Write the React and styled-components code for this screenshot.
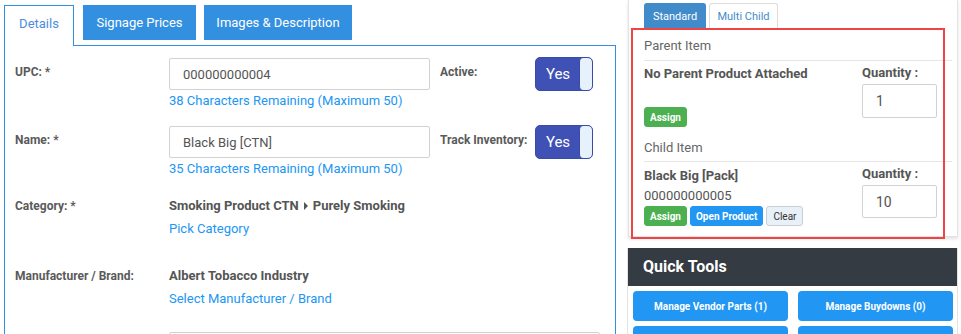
import React from "react";
import styled, { createGlobalStyle } from "styled-components";

const Global = createGlobalStyle`
  html, body { margin: 0; padding: 0; background: #fff; }
  body { font-family: Roboto, "Liberation Sans", Arial, sans-serif; }
  * { box-sizing: border-box; }
`;

const Page = styled.div`
  width: 961px;
  height: 334px;
  overflow: hidden;
  display: flex;
  align-items: flex-start;
  position: relative;
`;

const LeftCol = styled.div`
  width: 616px;
  padding: 5px 0 0 4px;
  flex-shrink: 0;
`;

const TabBar = styled.div`
  display: flex;
  align-items: flex-start;
  height: 40px;
`;

const ActiveTab = styled.div`
  width: 70px;
  height: 41px;
  margin-bottom: -1px;
  border: 1px solid #2f8fe0;
  border-bottom: none;
  background: #fff;
  color: #4d8edc;
  font-size: 13px;
  display: flex;
  align-items: center;
  justify-content: center;
  position: relative;
  z-index: 1;
  padding-bottom: 5px;
`;

const TabButton = styled.div`
  height: 35px;
  width: ${(p) => p.$w}px;
  margin-left: ${(p) => p.$ml}px;
  background: #3390e0;
  color: #fff;
  font-size: 13px;
  display: flex;
  align-items: center;
  justify-content: center;
`;

const Panel = styled.div`
  width: 612px;
  height: 400px;
  border: 1px solid #2f8fe0;
  padding: 12px 0 0 10px;
`;

const Row = styled.div`
  display: flex;
  align-items: flex-start;
  margin-top: ${(p) => p.$mt || 0}px;
`;

const Label = styled.div`
  width: 154px;
  flex-shrink: 0;
  padding-top: ${(p) => p.$pt || 0}px;
  font-size: 12px;
  line-height: 20px;
  font-weight: 700;
  color: #5a5a5a;
  white-space: nowrap;
`;

const Field = styled.div`
  width: ${(p) => p.$w || 261}px;
  display: flex;
  flex-direction: column;
`;

const TextInput = styled.div`
  height: 32px;
  border: 1px solid #d2d2d2;
  border-radius: 2px;
  padding: 0 13px;
  display: flex;
  align-items: center;
  font-size: 13px;
  color: #555;
  background: #fff;
`;

const Helper = styled.div`
  margin-top: ${(p) => p.$mt || 0}px;
  font-size: 13px;
  line-height: 20px;
  color: #2196f3;
  white-space: nowrap;
`;

const Value = styled.div`
  font-size: 13px;
  line-height: 20px;
  font-weight: 700;
  color: #555;
  display: flex;
  align-items: center;
  white-space: nowrap;
`;

const Caret = styled.span`
  display: inline-block;
  width: 0;
  height: 0;
  border-top: 4px solid transparent;
  border-bottom: 4px solid transparent;
  border-left: 4px solid #555;
  margin: 0 5px 0 5px;
`;

const SideLabel = styled(Label)`
  width: 95px;
  margin-left: 10px;
`;

const Toggle = styled.div`
  width: 58px;
  height: 34px;
  margin-top: -1px;
  background: #3f51b5;
  border: 1px solid #3a4aa8;
  border-radius: 5px;
  display: flex;
  overflow: hidden;
`;

const ToggleText = styled.div`
  flex: 1;
  display: flex;
  align-items: center;
  justify-content: center;
  color: #fff;
  font-size: 15px;
  padding-left: 1px;
`;

const ToggleKnob = styled.div`
  width: 13px;
  background: #e7f1fc;
  border-left: 1px solid #3a4aa8;
  border-radius: 4px;
`;

const RightCol = styled.div`
  width: 331px;
  margin-left: 11px;
  flex-shrink: 0;
  position: relative;
`;

const Card = styled.div`
  margin-left: 1px;
  border: 1px solid #e3e3e3;
  border-top: none;
  padding: 3px 5px 10px 15px;
  box-shadow: 0 2px 3px rgba(0, 0, 0, 0.12);
  background: #fff;
`;

const PillTabs = styled.div`
  display: flex;
  gap: 3px;
`;

const Pill = styled.div`
  height: 25px;
  width: ${(p) => p.$w}px;
  border-radius: 3px 3px 0 0;
  font-size: 11px;
  display: flex;
  align-items: center;
  justify-content: center;
  background: ${(p) => (p.$active ? "#428bca" : "#fff")};
  color: ${(p) => (p.$active ? "#fff" : "#428bca")};
  border: 1px solid ${(p) => (p.$active ? "#428bca" : "#ddd")};
  border-bottom: none;
`;

const SectionTitle = styled.div`
  margin-top: ${(p) => p.$mt}px;
  font-size: 13px;
  line-height: 20px;
  color: #666;
  padding-bottom: ${(p) => p.$pb}px;
  border-bottom: 1px solid #e6e6e6;
`;

const ItemRow = styled.div`
  display: flex;
  justify-content: space-between;
  padding-right: 15px;
  margin-top: ${(p) => p.$mt}px;
`;

const ItemInfo = styled.div`
  display: flex;
  flex-direction: column;
`;

const ItemName = styled.div`
  font-size: 13px;
  line-height: 20px;
  font-weight: 700;
  color: #555;
  margin-top: ${(p) => p.$mt || 0}px;
`;

const ItemCode = styled.div`
  font-size: 13px;
  line-height: 20px;
  color: #555;
`;

const BtnRow = styled.div`
  display: flex;
  gap: 3px;
  margin-top: ${(p) => p.$mt || 0}px;
`;

const SmallBtn = styled.div`
  height: 20px;
  padding: 0 ${(p) => p.$px || 5}px;
  border-radius: 3px;
  font-size: 10px;
  font-weight: ${(p) => (p.$variant === "light" ? 400 : 700)};
  display: flex;
  align-items: center;
  background: ${(p) =>
    p.$variant === "green" ? "#4caf50" : p.$variant === "blue" ? "#2196f3" : "#e8f0f8"};
  color: ${(p) => (p.$variant === "light" ? "#333" : "#fff")};
  border: 1px solid
    ${(p) =>
      p.$variant === "green" ? "#4caf50" : p.$variant === "blue" ? "#2196f3" : "#c9cfd6"};
`;

const QtyCol = styled.div`
  width: 75px;
  display: flex;
  flex-direction: column;
`;

const QtyLabel = styled.div`
  font-size: 13px;
  line-height: 20px;
  font-weight: 700;
  color: #555;
  white-space: nowrap;
`;

const QtyInput = styled.div`
  margin-top: 1px;
  height: ${(p) => p.$h}px;
  border: 1px solid #d2d2d2;
  border-radius: 2px;
  padding-left: 13px;
  display: flex;
  align-items: center;
  font-size: 14px;
  color: #555;
`;

const Highlight = styled.div`
  position: absolute;
  left: 4px;
  top: 28px;
  width: 314px;
  height: 211px;
  border: 2px solid #f04444;
  pointer-events: none;
`;

const Tools = styled.div`
  margin-top: 11px;
  border: 1px solid #e3e3e3;
  border-top: none;
  background: #fff;
`;

const ToolsHeader = styled.div`
  height: 38px;
  background: #353b42;
  color: #fff;
  font-size: 16px;
  font-weight: 700;
  padding: 0 0 2px 15px;
  display: flex;
  align-items: center;
`;

const ToolsGrid = styled.div`
  display: grid;
  grid-template-columns: 155px 155px;
  column-gap: 10px;
  row-gap: 5px;
  padding: 5px 0 0 5px;
`;

const ToolBtn = styled.div`
  height: 30px;
  border-radius: 4px;
  background: #2196f3;
  color: #fff;
  font-size: 10px;
  font-weight: 700;
  display: flex;
  align-items: center;
  justify-content: center;
`;

export default function App() {
  return (
    <>
      <Global />
      <Page>
        <LeftCol>
          <TabBar>
            <ActiveTab>Details</ActiveTab>
            <TabButton $ml={9} $w={113}>Signage Prices</TabButton>
            <TabButton $ml={8} $w={148}>Images &amp; Description</TabButton>
          </TabBar>
          <Panel>
            <Row>
              <Label $pt={4}>UPC: *</Label>
              <Field>
                <TextInput>000000000004</TextInput>
                <Helper $mt={1}>38 Characters Remaining (Maximum 50)</Helper>
              </Field>
              <SideLabel $pt={4}>Active:</SideLabel>
              <Toggle>
                <ToggleText>Yes</ToggleText>
                <ToggleKnob />
              </Toggle>
            </Row>
            <Row $mt={15}>
              <Label $pt={4}>Name: *</Label>
              <Field>
                <TextInput>Black Big [CTN]</TextInput>
                <Helper $mt={1}>35 Characters Remaining (Maximum 50)</Helper>
              </Field>
              <SideLabel $pt={4}>Track Inventory:</SideLabel>
              <Toggle>
                <ToggleText>Yes</ToggleText>
                <ToggleKnob />
              </Toggle>
            </Row>
            <Row $mt={17}>
              <Label>Category: *</Label>
              <Field>
                <Value>
                  Smoking Product CTN<Caret />Purely Smoking
                </Value>
                <Helper $mt={3}>Pick Category</Helper>
              </Field>
            </Row>
            <Row $mt={27}>
              <Label>Manufacturer / Brand:</Label>
              <Field>
                <Value>Albert Tobacco Industry</Value>
                <Helper $mt={3}>Select Manufacturer / Brand</Helper>
              </Field>
            </Row>
            <Row $mt={23}>
              <Label />
              <Field $w={431}>
                <TextInput />
              </Field>
            </Row>
          </Panel>
        </LeftCol>
        <RightCol>
          <Card>
            <PillTabs>
              <Pill $active $w={62}>Standard</Pill>
              <Pill $w={69}>Multi Child</Pill>
            </PillTabs>
            <SectionTitle $mt={8} $pb={4}>Parent Item</SectionTitle>
            <ItemRow $mt={2}>
              <ItemInfo>
                <ItemName $mt={1}>No Parent Product Attached</ItemName>
                <BtnRow $mt={23}>
                  <SmallBtn $variant="green">Assign</SmallBtn>
                </BtnRow>
              </ItemInfo>
              <QtyCol>
                <QtyLabel>Quantity :</QtyLabel>
                <QtyInput $h={34}>1</QtyInput>
              </QtyCol>
            </ItemRow>
            <SectionTitle $mt={11} $pb={3}>Child Item</SectionTitle>
            <ItemRow $mt={2}>
              <ItemInfo>
                <ItemName $mt={2}>Black Big [Pack]</ItemName>
                <ItemCode>000000000005</ItemCode>
                <BtnRow>
                  <SmallBtn $variant="green">Assign</SmallBtn>
                  <SmallBtn $variant="blue">Open Product</SmallBtn>
                  <SmallBtn $variant="light" $px={6}>Clear</SmallBtn>
                </BtnRow>
              </ItemInfo>
              <QtyCol>
                <QtyLabel>Quantity :</QtyLabel>
                <QtyInput $h={33}>10</QtyInput>
              </QtyCol>
            </ItemRow>
          </Card>
          <Highlight />
          <Tools>
            <ToolsHeader>Quick Tools</ToolsHeader>
            <ToolsGrid>
              <ToolBtn>Manage Vendor Parts (1)</ToolBtn>
              <ToolBtn>Manage Buydowns (0)</ToolBtn>
              <ToolBtn />
              <ToolBtn />
            </ToolsGrid>
          </Tools>
        </RightCol>
      </Page>
    </>
  );
}
